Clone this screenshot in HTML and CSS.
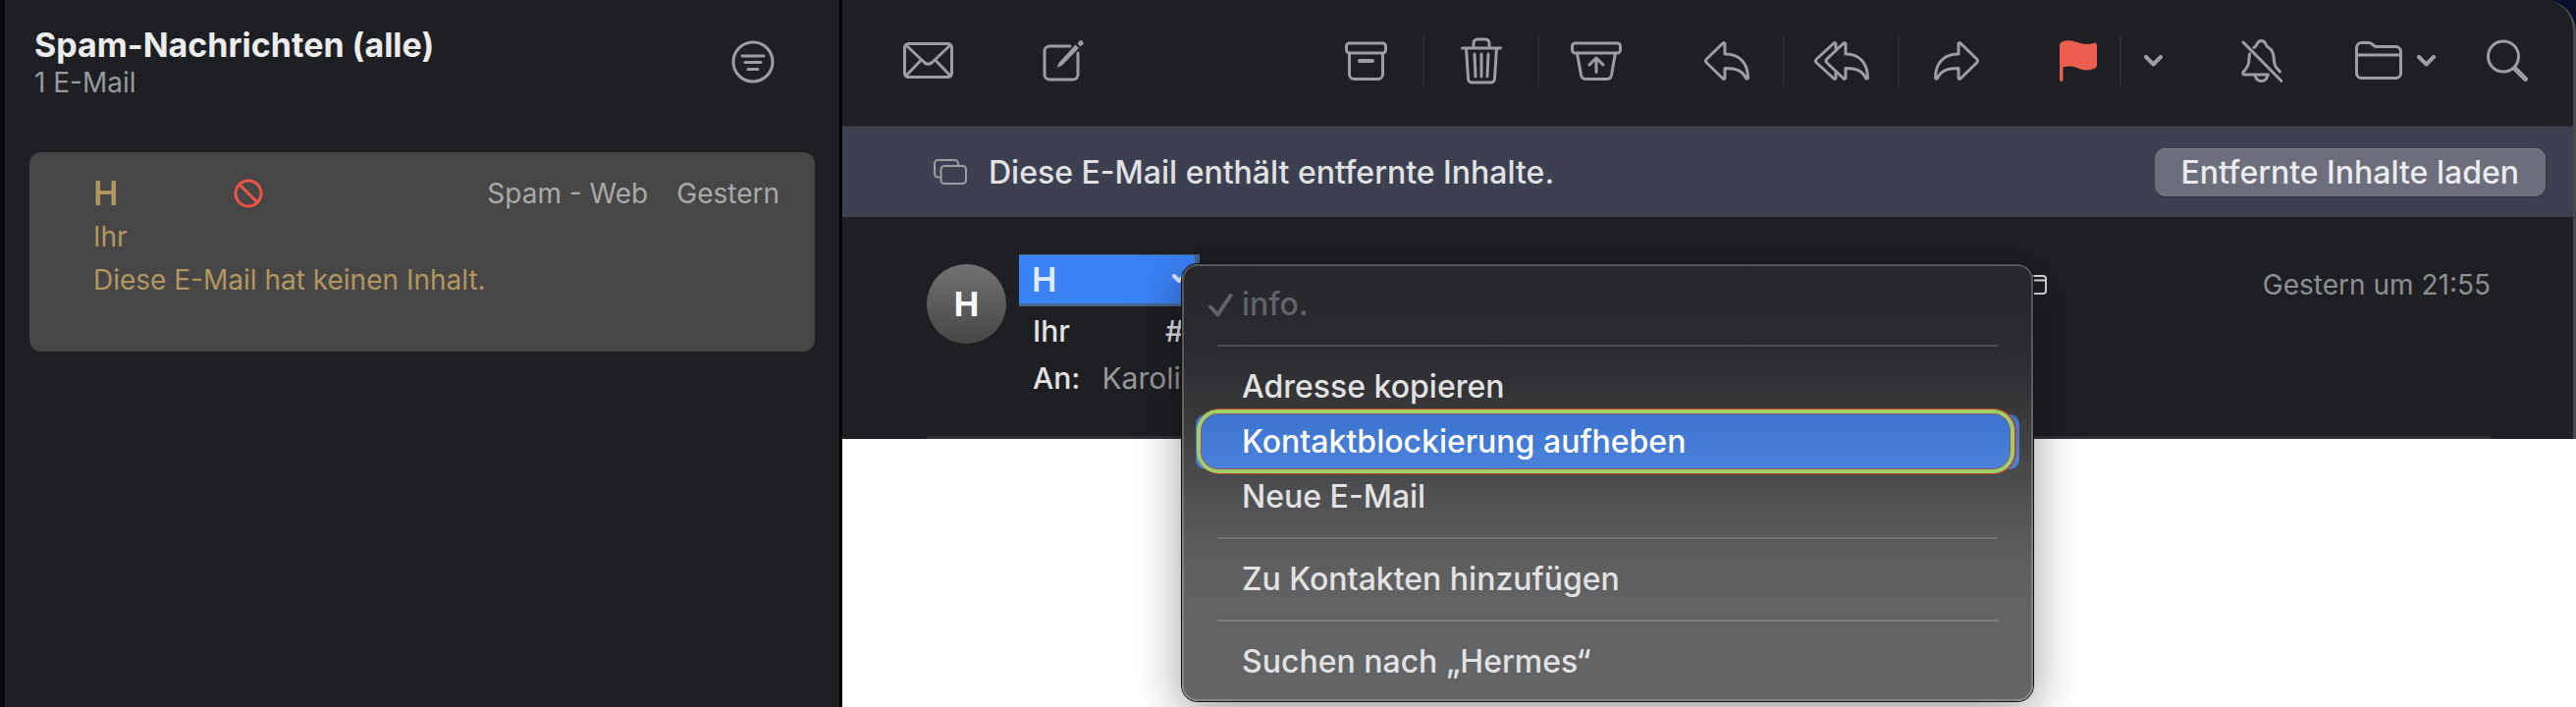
FILE: index.html
```html
<!DOCTYPE html>
<html lang="de">
<head>
  <meta charset="UTF-8">
  <meta name="viewport" content="width=device-width, initial-scale=1.0">
  <title>Spam-Nachrichten (alle)</title>
  <link rel="stylesheet" href="styles.css">
</head>
<body>
<div class="window">

  <!-- Message list -->
  <aside class="sidebar">
    <header class="list-header">
      <div>
        <h1>Spam-Nachrichten (alle)</h1>
        <p class="count">1 E-Mail</p>
      </div>
      <button class="icon-button" aria-label="Filter">
        <svg width="44" height="44" viewBox="0 0 44 44"><circle cx="22" cy="22" r="20"/><path d="M11 16h22M14 22.500h16M17 29.500h10"/></svg>
      </button>
    </header>
    <article class="mail-card">
      <div class="mail-top">
        <h2>H</h2>
        <svg class="blocked" width="30" height="30" viewBox="0 0 30 30"><circle cx="15" cy="15" r="13"/><path d="M6 6l18 18"/></svg>
        <span class="mailbox">Spam - Web</span>
        <span>Gestern</span>
      </div>
      <p>Ihr</p>
      <p>Diese E-Mail hat keinen Inhalt.</p>
    </article>
  </aside>

  <!-- Message viewer -->
  <main class="viewer">
    <div class="pane">
      <div class="toolbar">
        <button class="icon-button" aria-label="E-Mails empfangen">
          <svg width="51" height="37" viewBox="0 0 51 37"><rect x="1.500" y="1.500" width="48" height="34" rx="4"/><path d="M3 3l18.500 17.500q4 3.500 8 0L48 3M3 34l15.500-16M48 34L32.500 18"/></svg>
        </button>
        <button class="icon-button" aria-label="Neue E-Mail verfassen">
          <svg width="42" height="42" viewBox="0 0 42 42"><path d="M28 6H7a5 5 0 0 0-5 5v24a5 5 0 0 0 5 5h24a5 5 0 0 0 5-5V13"/><path class="solid" d="M33.500 4.500l3.500 3.500L20 25.500l-5.500 2.500 2.500-5.500zM36.500 2.500a2.600 2.600 0 1 1 3 3l-1 1-3-3z"/></svg>
        </button>

        <div class="group group-first">
          <button class="icon-button" aria-label="Archivieren">
            <svg width="43" height="40" viewBox="0 0 43 40"><rect x="1.500" y="2" width="40" height="10" rx="3"/><path d="M4.500 12v21.500a5 5 0 0 0 5 5h24a5 5 0 0 0 5-5V12"/><path class="thick" d="M15 20h13"/></svg>
          </button>
          <button class="icon-button" aria-label="Löschen">
            <svg width="42" height="48" viewBox="0 0 42 48"><path d="M1.500 11h39M13 10V6a4 4 0 0 1 4-4h8a4 4 0 0 1 4 4v4M5.500 11l2 31a4 4 0 0 0 4 4h19a4 4 0 0 0 4-4l2-31M14 17l1 23M21 17v23M28 17l-1 23"/></svg>
          </button>
          <button class="icon-button" aria-label="Keine Spam-Mail">
            <svg width="52" height="40" viewBox="0 0 52 40"><rect x="1.500" y="2" width="49" height="10" rx="3"/><path d="M6.500 12l4 22.500a5 5 0 0 0 5 4h21a5 5 0 0 0 5-4l4-22.500M26 31.500V17.500M19 24l7-7 7 7"/></svg>
          </button>
        </div>

        <div class="group">
          <button class="icon-button" aria-label="Antworten">
            <svg width="46" height="40" viewBox="0 0 46 40"><path d="M21 2.500v10.500c15 0 23.500 9 23.500 24.500q-.5 1.500-2 0C38.500 30 33 27.500 21 27.500v10q-.5 1.500-2 .5L2.500 22q-2-2 0-4L19 2q1.500-1 2 .5z"/></svg>
          </button>
          <button class="icon-button" aria-label="Allen antworten">
            <svg width="56" height="40" viewBox="0 0 56 40"><path d="M32 2.500v10.500c14 0 22.500 9 22.500 24.500q-.5 1.500-2 0C49 30 43 27.500 32 27.500v10q-.5 1.500-2 .5L13 22q-2-2 0-4L30 2q1.500-1 2 .5z"/><path d="M22 8V2.500q-.5-1.500-2-.5L2.500 18q-2 2 0 4L20 38q1.500 1 2-.5V32"/></svg>
          </button>
          <button class="icon-button" aria-label="Weiterleiten">
            <svg width="46" height="40" viewBox="0 0 46 40"><path d="M25 2.500v10.500C10 13 1.500 22 1.500 37.500q.5 1.500 2 0C7.500 30 13 27.500 25 27.500v10q.5 1.500 2 .5L43.500 22q2-2 0-4L27 2q-1.500-1-2 .5z"/></svg>
          </button>
        </div>

        <div class="group group-flag">
          <button class="icon-button" aria-label="Markieren">
            <svg class="flag" width="38" height="42" viewBox="0 0 38 42"><path d="M0 5Q0 2.500 2.500 1.500C10-1.500 16 2 23 3.500q6 1 11.500-.5Q38 2 38 5v20.500q0 2-2 3c-8 3.500-14 1.500-20-1-5-1.500-9-1-12.500 0V40q0 2-1.700 2T0 40z"/></svg>
          </button>
          <button class="icon-button" aria-label="Markierung wählen">
            <svg class="chevron" width="19" height="12" viewBox="0 0 19 12"><path d="M2 2l7.500 7.500L17 2"/></svg>
          </button>
        </div>

        <button class="icon-button mute" aria-label="Stummschalten">
          <svg width="42" height="44" viewBox="0 0 42 44"><path d="M13 8.500c2-1 2.500-2 3-3.500q1.500-3.500 4.500-3.500T25 5q.5 2 3 3.500c5 3 5 8.500 5.500 14 .5 5 2.500 7 6 10.500M8.500 15c-.5 3-.5 5-.8 8.500C7 29 4.500 30.500 2 33.500q-1 2.500 1.500 2.500h24M14 36q1 6.500 6.500 6.500T27 36"/><path d="M2 3l39 39.500"/></svg>
        </button>
        <button class="icon-button move" aria-label="Bewegen">
          <svg width="48" height="39" viewBox="0 0 48 39"><path d="M1.500 32.500V6.500a5 5 0 0 1 5-5h7q3 0 4.500 2t4 2h19.500a5 5 0 0 1 5 5v22a5 5 0 0 1-5 5h-35a5 5 0 0 1-5-5zM2 14h44.500"/></svg>
          <svg class="chevron" width="19" height="12" viewBox="0 0 19 12"><path d="M2 2l7.500 7.500L17 2"/></svg>
        </button>
        <button class="icon-button" aria-label="Suchen">
          <svg width="42" height="43" viewBox="0 0 42 43"><circle cx="17" cy="17.500" r="15.500"/><path class="handle" d="M28.500 29.500l11 11"/></svg>
        </button>
      </div>

      <div class="banner">
        <svg width="34" height="26" viewBox="0 0 34 26"><path d="M6 18.500H4.500A3.500 3.500 0 0 1 1 15V4.500A3.500 3.500 0 0 1 4.500 1h17A3.500 3.500 0 0 1 25 4.500V6"/><rect x="7.500" y="7" width="25.500" height="18" rx="3.500"/></svg>
        <p>Diese E-Mail enthält entfernte Inhalte.</p>
        <button class="load-button">Entfernte Inhalte laden</button>
      </div>

      <section class="message-header">
        <div class="avatar">H</div>
        <div class="details">
          <div class="sender-wrap">
            <button class="sender">
              <span>H</span>
              <svg class="chevron" width="16" height="12" viewBox="0 0 16 12"><path d="M2 2l5 5 5-5"/></svg>
            </button>

            <!-- Context menu of the sender -->
            <div class="menu" role="menu">
              <button class="item" role="menuitem" disabled>
                <svg class="check" width="25" height="24" viewBox="0 0 25 24"><path d="M2 13.500l7.500 8L22.500 2"/></svg>
                info.
              </button>
              <hr>
              <button class="item" role="menuitem">Adresse kopieren</button>
              <button class="item active" role="menuitem">Kontaktblockierung aufheben</button>
              <button class="item" role="menuitem">Neue E-Mail</button>
              <hr>
              <button class="item" role="menuitem">Zu Kontakten hinzufügen</button>
              <hr>
              <button class="item" role="menuitem">Suchen nach „Hermes“</button>
            </div>
          </div>
          <p class="subject"><span>Ihr</span><span>#</span></p>
          <p class="recipient"><span>An:</span><a href="#">Karoli</a></p>
        </div>
        <div class="meta">
          <svg width="30" height="20" viewBox="0 0 30 20"><rect x="1" y="1" width="28" height="18" rx="3"/><path d="M1 5.500h28"/></svg>
          <time>Gestern um 21:55</time>
        </div>
      </section>
    </div>
  </main>

</div>
</body>
</html>
```

FILE: styles.css
```css
* {
  box-sizing: border-box;
}
body {
  margin: 0;
  background: #0a0e28;
  font-family: Inter, "Liberation Sans", sans-serif;
  font-size: 28px;
  color: #e2e2e3;
}
h1, h2, p {
  margin: 0;
}
button {
  font: inherit;
  color: inherit;
  border: none;
  background: none;
  padding: 0;
}
svg {
  display: block;
  flex: none;
  fill: none;
  stroke: #9d9ea1;
  stroke-width: 3;
  stroke-linecap: round;
  stroke-linejoin: round;
}
.window {
  display: flex;
  min-height: 100vh;
}

/* Message list */
.sidebar {
  flex: none;
  width: 858px;
  padding: 24px 25px 0;
  background: #1e1f23;
  border-left: 5px solid #08090a;
  border-right: 3px solid #000;
}
.list-header {
  display: flex;
  justify-content: space-between;
  height: 131px;
  padding: 0 41px 0 5px;
}
.list-header .icon-button {
  height: 78px;
}
h1 {
  font-size: 34px;
  line-height: 44px;
  font-weight: 700;
  color: #ececec;
}
.count {
  font-size: 28px;
  line-height: 32px;
  color: #98999b;
}
.mail-card {
  height: 203px;
  padding: 20px 36px 0 65px;
  border-radius: 12px;
  background: #464646;
  color: #b39660;
  line-height: 44px;
}
.mail-top {
  display: flex;
  align-items: center;
  gap: 29px;
  color: #a9a9a9;
}
h2 {
  width: 114px;
  font-size: 34px;
  font-weight: 600;
  color: #b39660;
}
.blocked {
  stroke: #ec5545;
}
.mailbox {
  margin-left: auto;
}

/* Viewer */
.viewer {
  flex: 1;
  min-width: 0;
  background: linear-gradient(#0a0e28 100px, #fff 100px);
}
.pane {
  background: #1e1f23;
  border-right: 3px solid #48494c;
  border-top-right-radius: 32px;
}
.toolbar {
  display: flex;
  align-items: center;
  height: 129px;
  padding: 0 46px 5px 62px;
  border-bottom: 1px solid #2e3036;
}
.toolbar > .icon-button + .icon-button {
  margin-left: 91px;
}
.icon-button {
  display: flex;
  align-items: center;
  justify-content: center;
}
.group {
  display: flex;
  align-items: center;
  margin-left: 18px;
}
.group-first {
  margin-left: auto;
}
.group .icon-button {
  width: 115px;
  height: 51px;
}
.group .icon-button + .icon-button {
  box-sizing: content-box;
  border-left: 2px solid #2b2c30;
}
.group-flag {
  margin-left: 25px;
}
.group-flag .icon-button {
  width: 84px;
}
.group-flag .icon-button + .icon-button {
  width: 65px;
}
.flag {
  fill: #ec5e4f;
  stroke: none;
}
.solid {
  fill: #9d9ea1;
  stroke: none;
}
.thick, .chevron {
  stroke-width: 4;
}
.handle {
  stroke-width: 5;
}
.toolbar .mute {
  margin-left: 57px;
}
.toolbar > .mute + .move {
  gap: 15px;
  margin-left: 74px;
}
.toolbar > .move + .icon-button {
  margin-left: 52px;
}
.banner {
  display: flex;
  align-items: center;
  height: 92px;
  padding: 0 28px 0 93px;
  background: #3c4050;
  font-size: 32px;
  font-weight: 500;
}
.banner svg {
  stroke-width: 2;
}
.banner p {
  margin-left: 22px;
}
.load-button {
  height: 49px;
  margin-left: auto;
  padding: 0 27px;
  border-radius: 11px;
  background: #6c6f7b;
  box-shadow: inset 0 1px #7d808b, 0 1px 2px #2e313d;
  color: #ececee;
}

/* Message header */
.message-header {
  display: flex;
  align-items: flex-start;
  margin: 0 84px 0 86px;
  height: 226px;
  border-bottom: 3px solid #303135;
}
.avatar {
  width: 81px;
  height: 81px;
  margin-top: 48px;
  border-radius: 50%;
  background: linear-gradient(#727272, #464646);
  font-size: 34px;
  font-weight: 700;
  line-height: 81px;
  text-align: center;
  color: #fff;
}
.details {
  margin: 38px 0 0 13px;
  font-size: 30px;
  font-weight: 500;
  line-height: 48px;
}
.sender-wrap {
  position: relative;
  margin-bottom: 1px;
}
.sender {
  display: flex;
  align-items: center;
  justify-content: space-between;
  width: 184px;
  height: 53px;
  padding: 0 7px 0 13px;
  border: solid #4a6690;
  border-width: 1px 5px 3px 0;
  background: #3b82f7;
  font-size: 34px;
  font-weight: 600;
  color: #dfeafd;
}
.sender svg {
  stroke: #dfeafd;
}
.subject, .recipient {
  display: flex;
  padding-left: 14px;
}
.subject span:first-child {
  width: 135px;
}
.recipient {
  gap: 22px;
}
.recipient a {
  color: #98999b;
  font-weight: 400;
  text-decoration: none;
}
.meta {
  display: flex;
  align-items: center;
  gap: 220px;
  margin-left: auto;
  padding-top: 52px;
  color: #8e8f91;
}
.meta svg {
  stroke: #dcdcdd;
  stroke-width: 2;
}

/* Context menu */
.menu {
  position: absolute;
  z-index: 1;
  top: 10px;
  left: 166px;
  width: 867px;
  padding: 11px 12px 10px;
  border: 2px solid rgba(255, 255, 255, 0.22);
  border-radius: 16px;
  background: linear-gradient(#26272b, #2a2b2f 20%, #38383b 33%, #4e4f51 52%, #5e5d5d 66%, #626466 80%, #626466) border-box;
  box-shadow: 0 0 0 1px #111, 0 12px 50px rgba(0, 0, 0, 0.4);
  color: #e2e2e2;
  font-size: 32px;
}
.item {
  position: relative;
  display: block;
  width: 100%;
  height: 56px;
  padding-left: 47px;
  border-radius: 10px;
  text-align: left;
}
.item:disabled {
  color: #626367;
}
.check {
  position: absolute;
  top: 17px;
  left: 13px;
  stroke: #626367;
  stroke-width: 4;
}
.active {
  background: linear-gradient(#3b73cf, #4c82dc);
  color: #fff;
}
.active::after {
  content: "";
  position: absolute;
  inset: -5px 5px -4px 1px;
  border: 4px solid #a0cf68;
  border-radius: 22px;
  box-shadow: 1px 0 0 1px #b5432f, inset 0 0 0 1px #8d5a68;
}
.menu hr {
  height: 2px;
  margin: 13px 22px;
  border: none;
  background: rgba(255, 255, 255, 0.16);
}
```
